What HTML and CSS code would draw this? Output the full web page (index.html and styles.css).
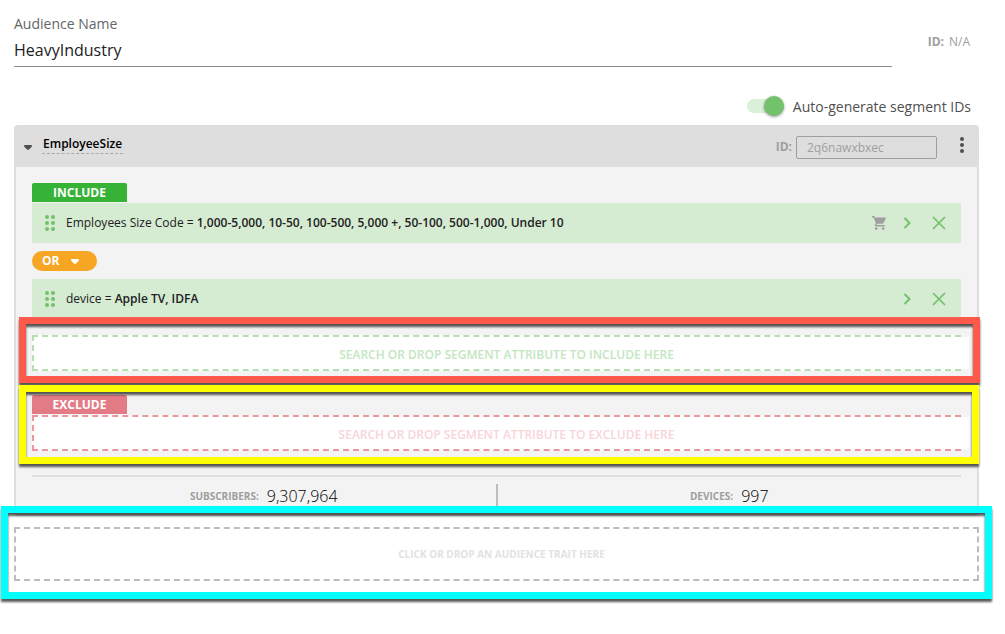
FILE: index.html
```html
<!DOCTYPE html>
<html lang="en">
<head>
<meta charset="utf-8">
<meta name="viewport" content="width=device-width, initial-scale=1">
<title>Audience Builder</title>
<link rel="stylesheet" href="styles.css">
</head>
<body>
<svg class="sprite" aria-hidden="true">
  <symbol id="grip" viewBox="0 0 10 16"><circle cx="2" cy="2" r="2"/><circle cx="8" cy="2" r="2"/><circle cx="2" cy="8" r="2"/><circle cx="8" cy="8" r="2"/><circle cx="2" cy="14" r="2"/><circle cx="8" cy="14" r="2"/></symbol>
  <symbol id="chevron" viewBox="0 0 8 12"><path d="M1.500 1l5 5-5 5" fill="none" stroke="currentColor" stroke-width="2"/></symbol>
  <symbol id="close" viewBox="0 0 14 14"><path d="M1 1l12 12M13 1L1 13" fill="none" stroke="currentColor" stroke-width="1.700"/></symbol>
  <symbol id="caret" viewBox="0 0 8 5"><path d="M1 0h6q1 0 1 1 0 .5-.5 1L5 4.500q-1 .8-2 0L.5 2Q0 1.500 0 1 0 0 1 0z"/></symbol>
</svg>
<main class="page">
  <header class="top">
    <div class="field">
      <label for="audience-name">Audience Name</label>
      <input id="audience-name" type="text" value="HeavyIndustry">
    </div>
    <p class="audience-id"><b>ID:</b><span>N/A</span></p>
  </header>

  <div class="auto">
    <input id="auto-ids" class="switch" type="checkbox" role="switch" checked>
    <label for="auto-ids">Auto-generate segment IDs</label>
  </div>

  <section class="card">
    <header class="card-head">
      <button class="collapse" type="button" aria-label="Collapse segment"><svg width="8" height="5"><use href="#caret"/></svg></button>
      <button class="segment-name" type="button">EmployeeSize</button>
      <label class="id-label" for="segment-id">ID:</label>
      <input id="segment-id" class="segment-id" type="text" value="2q6nawxbxec" disabled>
      <button class="more" type="button" aria-label="More options"><svg width="4" height="16" viewBox="0 0 4 16"><circle cx="2" cy="2" r="2"/><circle cx="2" cy="8" r="2"/><circle cx="2" cy="14" r="2"/></svg></button>
    </header>

    <div class="card-body">
      <div class="tag include-tag">INCLUDE</div>
      <div class="row">
        <svg class="grip" width="10" height="16"><use href="#grip"/></svg>
        <p class="rule">Employees Size Code = <b>1,000-5,000, 10-50, 100-500, 5,000 +, 50-100, 500-1,000, Under 10</b></p>
        <svg class="cart" width="14" height="14" viewBox="1 2 20 20"><path d="M7 18c-1.100 0-2 .9-2 2s.9 2 2 2 2-.9 2-2-.9-2-2-2zM1 2v2h2l3.600 7.600-1.350 2.450c-.16.28-.25.61-.25.95 0 1.100.9 2 2 2h12v-2H7.420c-.14 0-.25-.11-.25-.25l.03-.12.9-1.630h7.450c.75 0 1.410-.41 1.750-1.030L20.880 5.500A1 1 0 0 0 20 4H5.210l-.94-2H1zm16 16c-1.100 0-2 .9-2 2s.9 2 2 2 2-.9 2-2-.9-2-2-2z"/></svg>
        <button class="icon-btn" type="button" aria-label="Edit"><svg width="8" height="12"><use href="#chevron"/></svg></button>
        <button class="icon-btn" type="button" aria-label="Remove"><svg width="14" height="14"><use href="#close"/></svg></button>
      </div>
      <button class="operator" type="button">OR <svg width="8" height="5"><use href="#caret"/></svg></button>
      <div class="row">
        <svg class="grip" width="10" height="16"><use href="#grip"/></svg>
        <p class="rule">device = <b>Apple TV, IDFA</b></p>
        <button class="icon-btn" type="button" aria-label="Edit"><svg width="8" height="12"><use href="#chevron"/></svg></button>
        <button class="icon-btn" type="button" aria-label="Remove"><svg width="14" height="14"><use href="#close"/></svg></button>
      </div>

      <div class="marked include-area">
        <div class="drop drop-include"><input type="text" aria-label="Include attribute" placeholder="SEARCH OR DROP SEGMENT ATTRIBUTE TO INCLUDE HERE"></div>
        <span class="ring ring-red"></span>
      </div>

      <div class="marked exclude-area">
        <div class="tag exclude-tag">EXCLUDE</div>
        <div class="drop drop-exclude"><input type="text" aria-label="Exclude attribute" placeholder="SEARCH OR DROP SEGMENT ATTRIBUTE TO EXCLUDE HERE"></div>
        <span class="ring ring-yellow"></span>
      </div>

      <footer class="stats">
        <p class="stat"><b>SUBSCRIBERS:</b> <span>9,307,964</span></p>
        <p class="stat"><b>DEVICES:</b> <span>997</span></p>
      </footer>
    </div>
  </section>

  <div class="marked trait-area">
    <button class="trait" type="button">CLICK OR DROP AN AUDIENCE TRAIT HERE</button>
    <span class="ring ring-cyan"></span>
  </div>
</main>
</body>
</html>
```

FILE: styles.css
```css
* { box-sizing: border-box; }
body { margin: 0; background: #fff; color: #212121; font: 12px/20px "Open Sans", "Noto Sans", sans-serif; }
p { margin: 0; }
button, input { font: inherit; color: inherit; }
button { display: flex; align-items: center; border: 0; padding: 0; background: none; cursor: pointer; }
svg { display: block; fill: currentColor; flex: none; }
.sprite { position: absolute; width: 0; height: 0; }
.page { padding: 14px 26px 32px 14px; }

.top { display: flex; padding-right: 9px; }
.field { flex: 1; display: flex; flex-direction: column; }
.field label { font-size: 14px; color: #666; }
.field input { width: 100%; height: 33px; padding: 0 0 1px; border: 0; border-bottom: 1px solid #8c8c8c; font-size: 16px; }
.audience-id { display: flex; justify-content: flex-end; gap: 5px; width: 78px; padding-top: 18px; color: #9e9e9e; }

.auto { display: flex; justify-content: flex-end; align-items: center; gap: 9px; margin-top: 28px; padding: 0 8px 8px 0; font-size: 14px; color: #505050; }
.auto label { padding-top: 2px; }
.switch { appearance: none; display: flex; align-items: center; justify-content: flex-end; width: 37px; height: 14px; margin: 0; border-radius: 7px; background: #daf0da; }
.switch::before { content: ""; width: 20px; height: 20px; border-radius: 50%; background: #74c16b; box-shadow: 0 1px 3px rgba(0, 0, 0, .4); }

.card { border: 2px solid #dedede; border-radius: 4px; background: #f3f3f3; }
.card-head { display: flex; align-items: center; height: 40px; padding: 0 13px 0 8px; background: #dedede; }
.collapse { width: 8px; margin: 1px 10px 0 0; color: #505050; }
.segment-name { height: 20px; margin: 0 auto 6px 0; padding: 0 1px; border-bottom: 1px dashed #aaa; font-weight: 600; color: #000; }
.id-label { margin-right: 4px; font-weight: 700; color: #9e9e9e; }
.segment-id { width: 141px; height: 23px; margin-top: 1px; padding: 0 10px; border: 1px solid #9e9e9e; border-radius: 2px; background: none; color: #9e9e9e; }
.more { margin: 0 0 4px 23px; color: #505050; }

.card-body { padding: 16px 16px 0; }
.tag { width: 95px; height: 19px; margin-bottom: 1px; border-radius: 2px 2px 0 0; color: #fff; font-weight: 700; line-height: 19px; text-align: center; }
.include-tag { background: #36b336; }
.exclude-tag { background: #e27b86; }
.row { display: flex; align-items: center; height: 40px; padding: 0 12px; border-radius: 2px; background: #d5ebd2; color: #74c16b; }
.grip { margin: 0 11px 0 1px; }
.rule { flex: 1; color: #212121; }
.rule b { font-weight: 600; }
.cart { margin-right: 11px; color: #9e9e9e; }
.icon-btn { justify-content: center; width: 20px; height: 20px; color: #74c16b; }
.icon-btn + .icon-btn { margin-left: 12px; }
.operator { gap: 12px; width: 65px; height: 20px; margin: 8px 0; padding: 0 10px; border-radius: 10px; background: #f6a623; color: #fff; font-weight: 700; }

.marked { position: relative; }
.ring { position: absolute; z-index: 1; border: 7px solid; filter: drop-shadow(0 3px 1px rgba(0, 0, 0, .65)); pointer-events: none; }
.ring-red { inset: -18px -19px -12px -13px; border-color: #ff594b; }
.ring-yellow { inset: -10px -18px -13px -13px; border-color: #ff0; }
.ring-cyan { inset: -21px -13px -18px -13px; border-color: #0ff; }
.include-area { margin-top: 16px; }
.exclude-area { margin-top: 24px; }

.drop { height: 36px; border: 2px dashed; border-right: 0; background: #fff; }
.drop input { display: block; width: calc(100% + 8px); height: 32px; padding: 3px 0 0 10px; border: 0; background: #fff; font-weight: 600; text-align: center; }
.drop input::placeholder { color: inherit; opacity: 1; }
.drop-include { border-color: #b5deb2; color: #c3e6c0; }
.drop-exclude { border-color: #eb979f; color: #f8d5d8; }

.stats { display: flex; height: 39px; margin-top: 24px; padding-top: 7px; border-top: 2px solid #dedede; }
.stat { flex: 1; display: flex; justify-content: center; align-items: center; gap: 8px; height: 24px; }
.stat + .stat { border-left: 2px solid #bdbdbd; }
.stat b { font-size: 10px; color: #9e9e9e; }
.stat span { font-size: 16px; font-weight: 300; color: #000; }

.trait-area { margin-top: 11px; }
.trait { justify-content: center; width: 100%; height: 54px; padding-left: 10px; border: 2px dashed #bdbdbd; font-size: 10px; font-weight: 700; color: #e2e2e2; }
```
